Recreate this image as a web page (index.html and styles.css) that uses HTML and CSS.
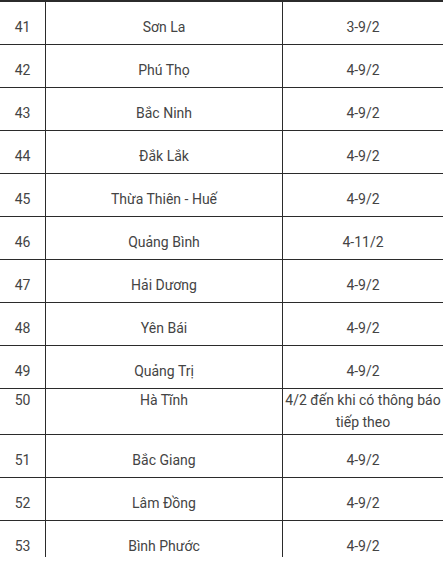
FILE: index.html
```html
<!DOCTYPE html>
<html lang="vi">
<head>
<meta charset="utf-8">
<link rel="stylesheet" href="styles.css">
</head>
<body>
<table class="tbl">
  <colgroup><col class="c1"><col class="c2"><col class="c3"></colgroup>
  <tbody>
    <tr><td>41</td><td>Sơn La</td><td>3-9/2</td></tr>
    <tr><td>42</td><td>Phú Thọ</td><td>4-9/2</td></tr>
    <tr><td>43</td><td>Bắc Ninh</td><td>4-9/2</td></tr>
    <tr><td>44</td><td>Đắk Lắk</td><td>4-9/2</td></tr>
    <tr><td>45</td><td>Thừa Thiên - Huế</td><td>4-9/2</td></tr>
    <tr><td>46</td><td>Quảng Bình</td><td>4-11/2</td></tr>
    <tr><td>47</td><td>Hải Dương</td><td>4-9/2</td></tr>
    <tr><td>48</td><td>Yên Bái</td><td>4-9/2</td></tr>
    <tr><td>49</td><td>Quảng Trị</td><td>4-9/2</td></tr>
    <tr class="multi"><td>50</td><td>Hà Tĩnh</td><td>4/2 đến khi có thông báo tiếp theo</td></tr>
    <tr><td>51</td><td>Bắc Giang</td><td>4-9/2</td></tr>
    <tr><td>52</td><td>Lâm Đồng</td><td>4-9/2</td></tr>
    <tr class="last"><td>53</td><td>Bình Phước</td><td>4-9/2</td></tr>
  </tbody>
</table>
</body>
</html>
```
FILE: styles.css
```css
html, body {
  margin: 0;
  padding: 0;
  background: #fff;
}

.tbl {
  border-collapse: separate;
  border-spacing: 0;
  table-layout: fixed;
  width: 443px;
  border-top: 2px solid #2b2b2b;
  font-family: Roboto, "Noto Sans", sans-serif;
  font-size: 14px;
  line-height: 22px;
  color: #444;
}

.c1 { width: 46px; }
.c2 { width: 237px; }
.c3 { width: 160px; }

.tbl td {
  box-sizing: border-box;
  height: 43px;
  padding: 14px 0 6px;
  text-align: center;
  vertical-align: top;
  border-bottom: 1px solid #2b2b2b;
}

.tbl td:nth-child(1),
.tbl td:nth-child(2) {
  border-right: 1px solid #2b2b2b;
}

.tbl .multi td {
  height: 46px;
  padding: 0 0 1px;
}

.tbl .last td {
  height: 36px;
  padding: 14px 0 0;
  border-bottom: none;
}
```
